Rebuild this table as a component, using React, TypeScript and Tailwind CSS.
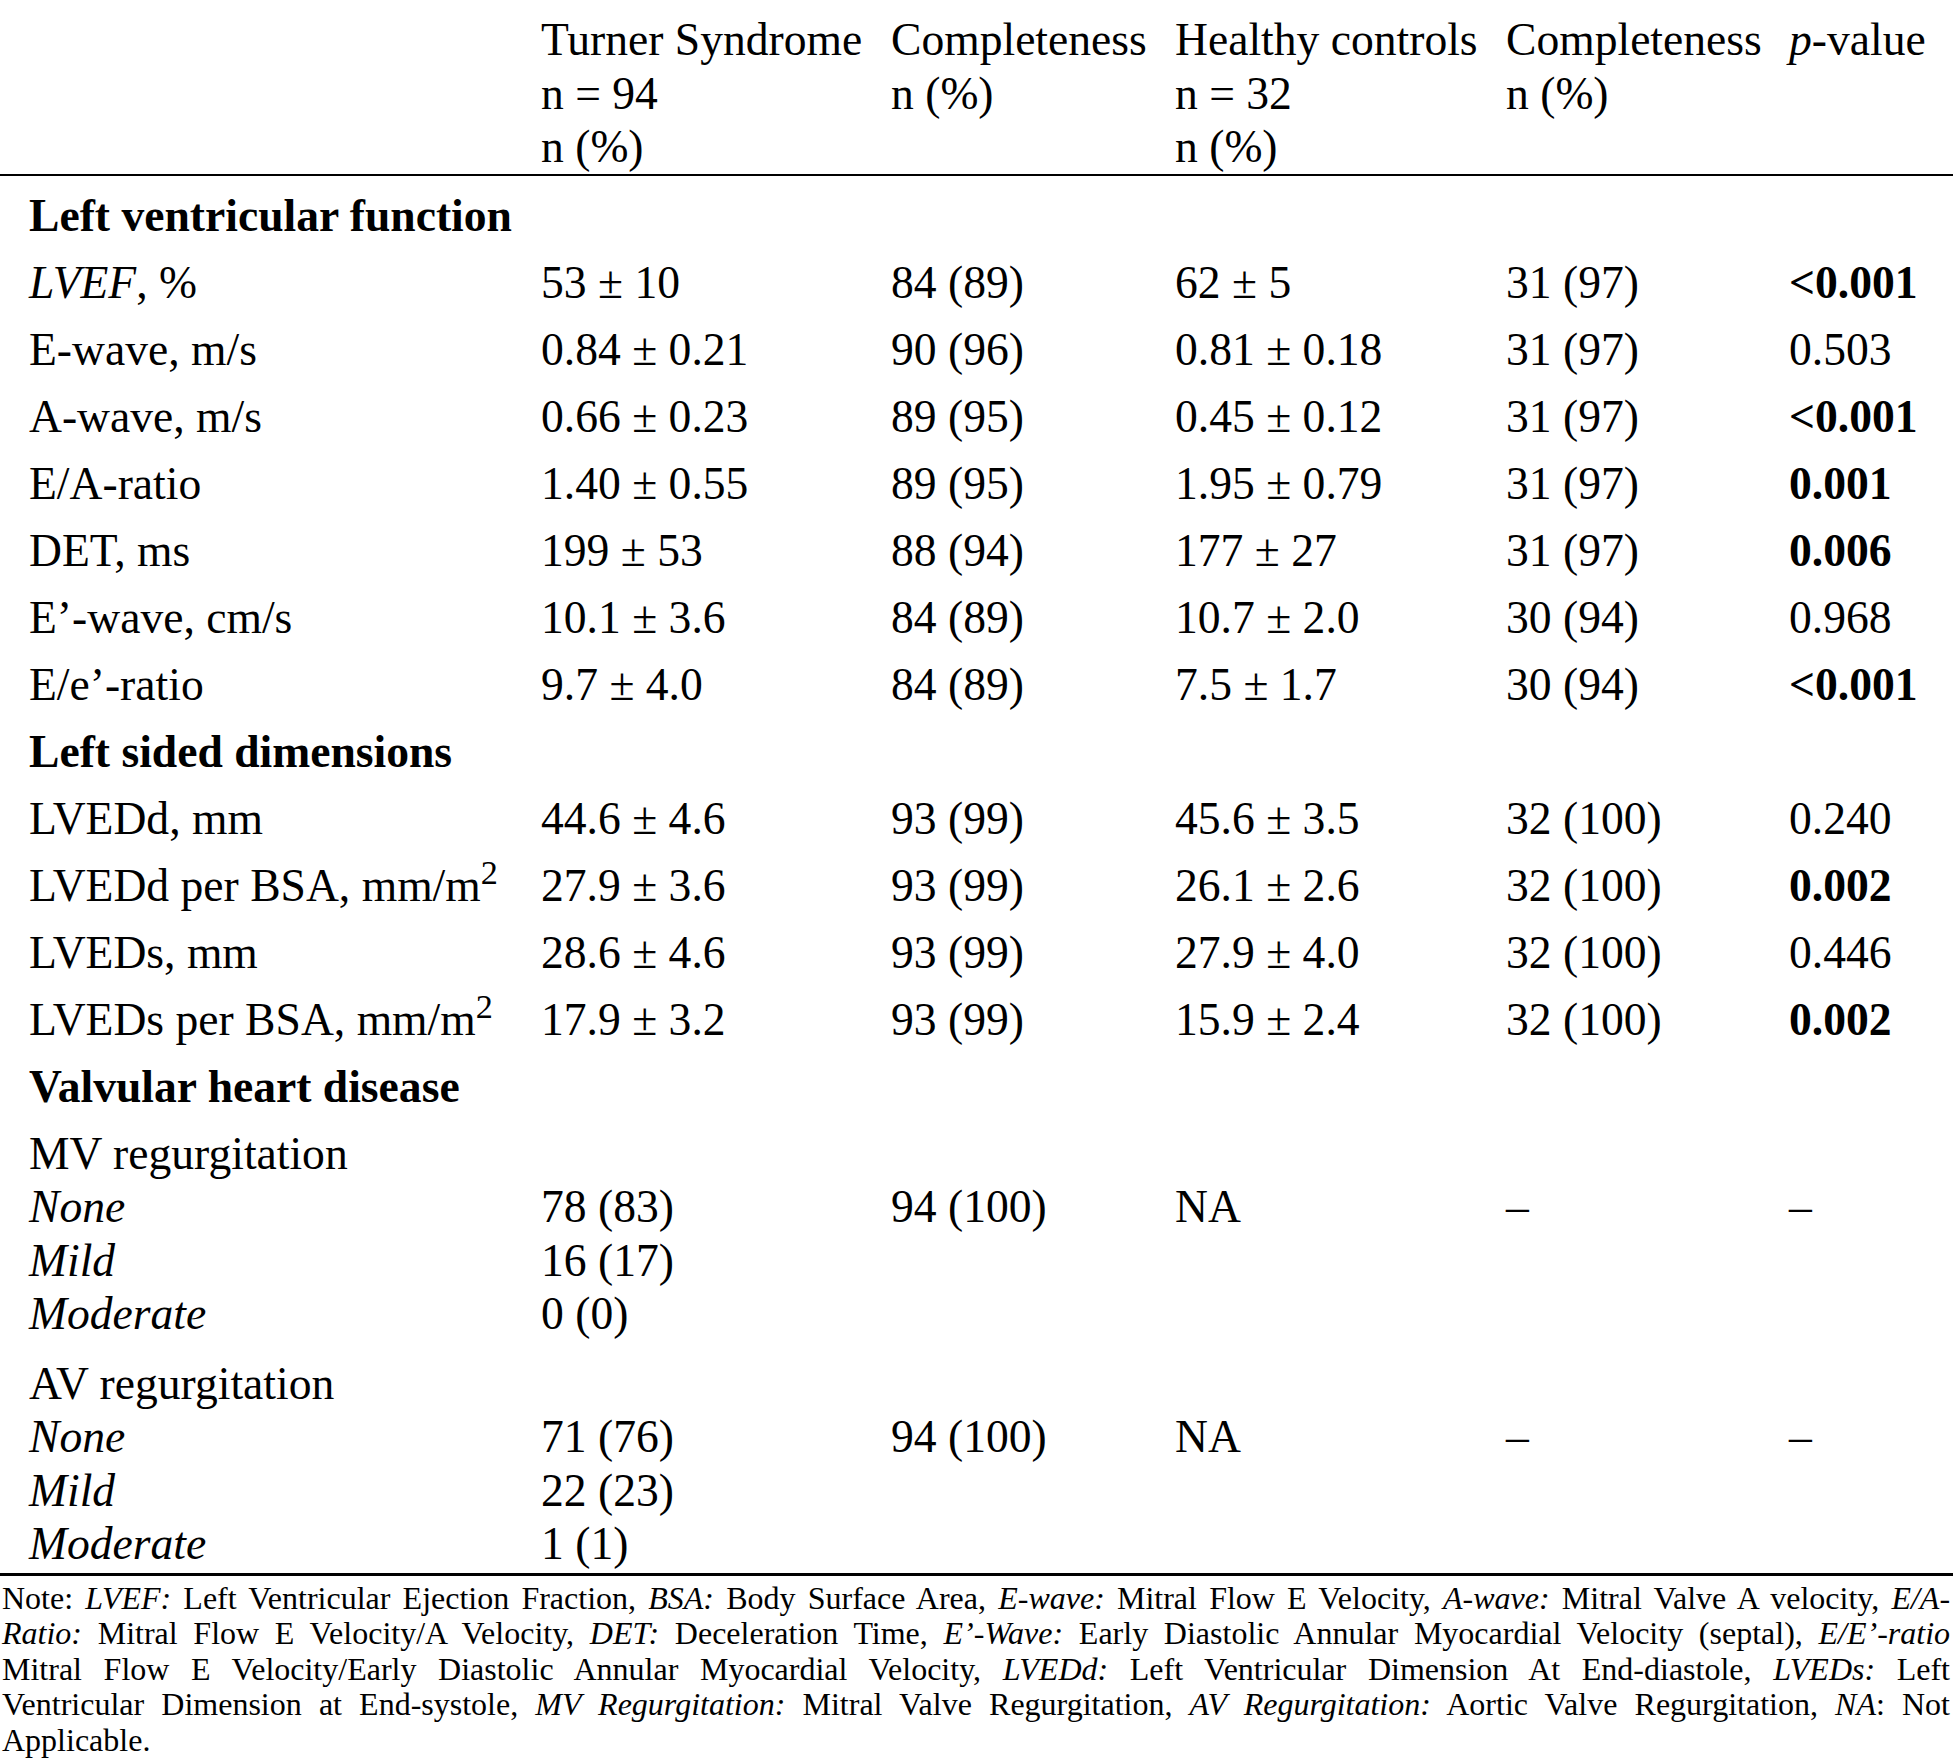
import React from 'react';

type Cell = string | React.ReactNode;

interface DataRow {
  label: Cell;
  ts: string;
  tsDone: string;
  hc: string;
  hcDone: string;
  p: string;
  sig?: boolean;
}

const cols = 'grid grid-cols-[541px_350px_284px_331px_283px_1fr]';

const m2 = (
  <>
    mm/m<sup>2</sup>
  </>
);

const lvFunction: DataRow[] = [
  { label: <><i>LVEF</i>, %</>, ts: '53 ± 10', tsDone: '84 (89)', hc: '62 ± 5', hcDone: '31 (97)', p: '<0.001', sig: true },
  { label: 'E-wave, m/s', ts: '0.84 ± 0.21', tsDone: '90 (96)', hc: '0.81 ± 0.18', hcDone: '31 (97)', p: '0.503' },
  { label: 'A-wave, m/s', ts: '0.66 ± 0.23', tsDone: '89 (95)', hc: '0.45 ± 0.12', hcDone: '31 (97)', p: '<0.001', sig: true },
  { label: 'E/A-ratio', ts: '1.40 ± 0.55', tsDone: '89 (95)', hc: '1.95 ± 0.79', hcDone: '31 (97)', p: '0.001', sig: true },
  { label: 'DET, ms', ts: '199 ± 53', tsDone: '88 (94)', hc: '177 ± 27', hcDone: '31 (97)', p: '0.006', sig: true },
  { label: 'E’-wave, cm/s', ts: '10.1 ± 3.6', tsDone: '84 (89)', hc: '10.7 ± 2.0', hcDone: '30 (94)', p: '0.968' },
  { label: 'E/e’-ratio', ts: '9.7 ± 4.0', tsDone: '84 (89)', hc: '7.5 ± 1.7', hcDone: '30 (94)', p: '<0.001', sig: true },
];

const lvDimensions: DataRow[] = [
  { label: 'LVEDd, mm', ts: '44.6 ± 4.6', tsDone: '93 (99)', hc: '45.6 ± 3.5', hcDone: '32 (100)', p: '0.240' },
  { label: <>LVEDd per BSA, {m2}</>, ts: '27.9 ± 3.6', tsDone: '93 (99)', hc: '26.1 ± 2.6', hcDone: '32 (100)', p: '0.002', sig: true },
  { label: 'LVEDs, mm', ts: '28.6 ± 4.6', tsDone: '93 (99)', hc: '27.9 ± 4.0', hcDone: '32 (100)', p: '0.446' },
  { label: <>LVEDs per BSA, {m2}</>, ts: '17.9 ± 3.2', tsDone: '93 (99)', hc: '15.9 ± 2.4', hcDone: '32 (100)', p: '0.002', sig: true },
];

const valves = [
  { name: 'MV regurgitation', grades: [['None', '78 (83)'], ['Mild', '16 (17)'], ['Moderate', '0 (0)']] },
  { name: 'AV regurgitation', grades: [['None', '71 (76)'], ['Mild', '22 (23)'], ['Moderate', '1 (1)']] },
];

function Section({ title }: { title: string }) {
  return (
    <div className={`${cols} py-[6.75px]`}>
      <div className="pl-[29px] font-bold">{title}</div>
    </div>
  );
}

function Row({ row }: { row: DataRow }) {
  return (
    <div className={`${cols} py-[6.75px]`}>
      <div className="pl-[29px]">{row.label}</div>
      <div>{row.ts}</div>
      <div>{row.tsDone}</div>
      <div>{row.hc}</div>
      <div>{row.hcDone}</div>
      <div className={row.sig ? 'font-bold' : ''}>{row.p}</div>
    </div>
  );
}

export default function App() {
  return (
    <div className="w-[1953px] bg-white text-black font-['Liberation_Serif','Times_New_Roman',serif]">
      <div className="text-[45.6px] leading-[53.5px] whitespace-nowrap">
        {/* header */}
        <div className={`${cols} pt-[13px]`}>
          <div />
          <div>
            Turner Syndrome
            <br />n = 94
            <br />n (%)
          </div>
          <div>
            Completeness
            <br />n (%)
          </div>
          <div>
            Healthy controls
            <br />n = 32
            <br />n (%)
          </div>
          <div>
            Completeness
            <br />n (%)
          </div>
          <div>
            <i>p</i>-value
          </div>
        </div>
        <div className="h-[2px] bg-black" />

        <div className="pt-[6.5px]">
          <Section title="Left ventricular function" />
          {lvFunction.map((r, i) => (
            <Row key={i} row={r} />
          ))}
          <Section title="Left sided dimensions" />
          {lvDimensions.map((r, i) => (
            <Row key={i} row={r} />
          ))}
          <Section title="Valvular heart disease" />
          {valves.map((v, i) => (
            <div key={v.name} className={`${cols} ${i === 0 ? 'pt-[6.75px] pb-[9px]' : 'pt-[6.75px] pb-[2px]'}`}>
              <div className="pl-[29px]">
                {v.name}
                {v.grades.map(([g]) => (
                  <div key={g}>
                    <i>{g}</i>
                  </div>
                ))}
              </div>
              <div>
                <br />
                {v.grades.map(([g, n]) => (
                  <div key={g}>{n}</div>
                ))}
              </div>
              <div>
                <br />
                94 (100)
              </div>
              <div>
                <br />
                NA
              </div>
              <div>
                <br />–
              </div>
              <div>
                <br />–
              </div>
            </div>
          ))}
        </div>
      </div>
      <div className="h-[3px] bg-black" />

      {/* footnote */}
      <div className="pt-[5px] pl-[2px] pr-[3px] text-[32px] leading-[35.5px] text-justify">
        <div className="[text-align-last:justify]">
          Note: <i>LVEF:</i> Left Ventricular Ejection Fraction, <i>BSA:</i> Body Surface Area, <i>E-wave:</i> Mitral Flow E
          Velocity, <i>A-wave:</i> Mitral Valve A velocity, <i>E/A-</i>
        </div>
        <div className="[text-align-last:justify]">
          <i>Ratio:</i> Mitral Flow E Velocity/A Velocity, <i>DET:</i> Deceleration Time, <i>E’-Wave:</i> Early Diastolic
          Annular Myocardial Velocity (septal), <i>E/E’-ratio</i>
        </div>
        <div className="[text-align-last:justify]">
          Mitral Flow E Velocity/Early Diastolic Annular Myocardial Velocity, <i>LVEDd:</i> Left Ventricular Dimension At
          End-diastole, <i>LVEDs:</i> Left
        </div>
        <div className="[text-align-last:justify]">
          Ventricular Dimension at End-systole, <i>MV Regurgitation:</i> Mitral Valve Regurgitation, <i>AV Regurgitation:</i>{' '}
          Aortic Valve Regurgitation, <i>NA</i>: Not
        </div>
        <div>Applicable.</div>
      </div>
    </div>
  );
}
